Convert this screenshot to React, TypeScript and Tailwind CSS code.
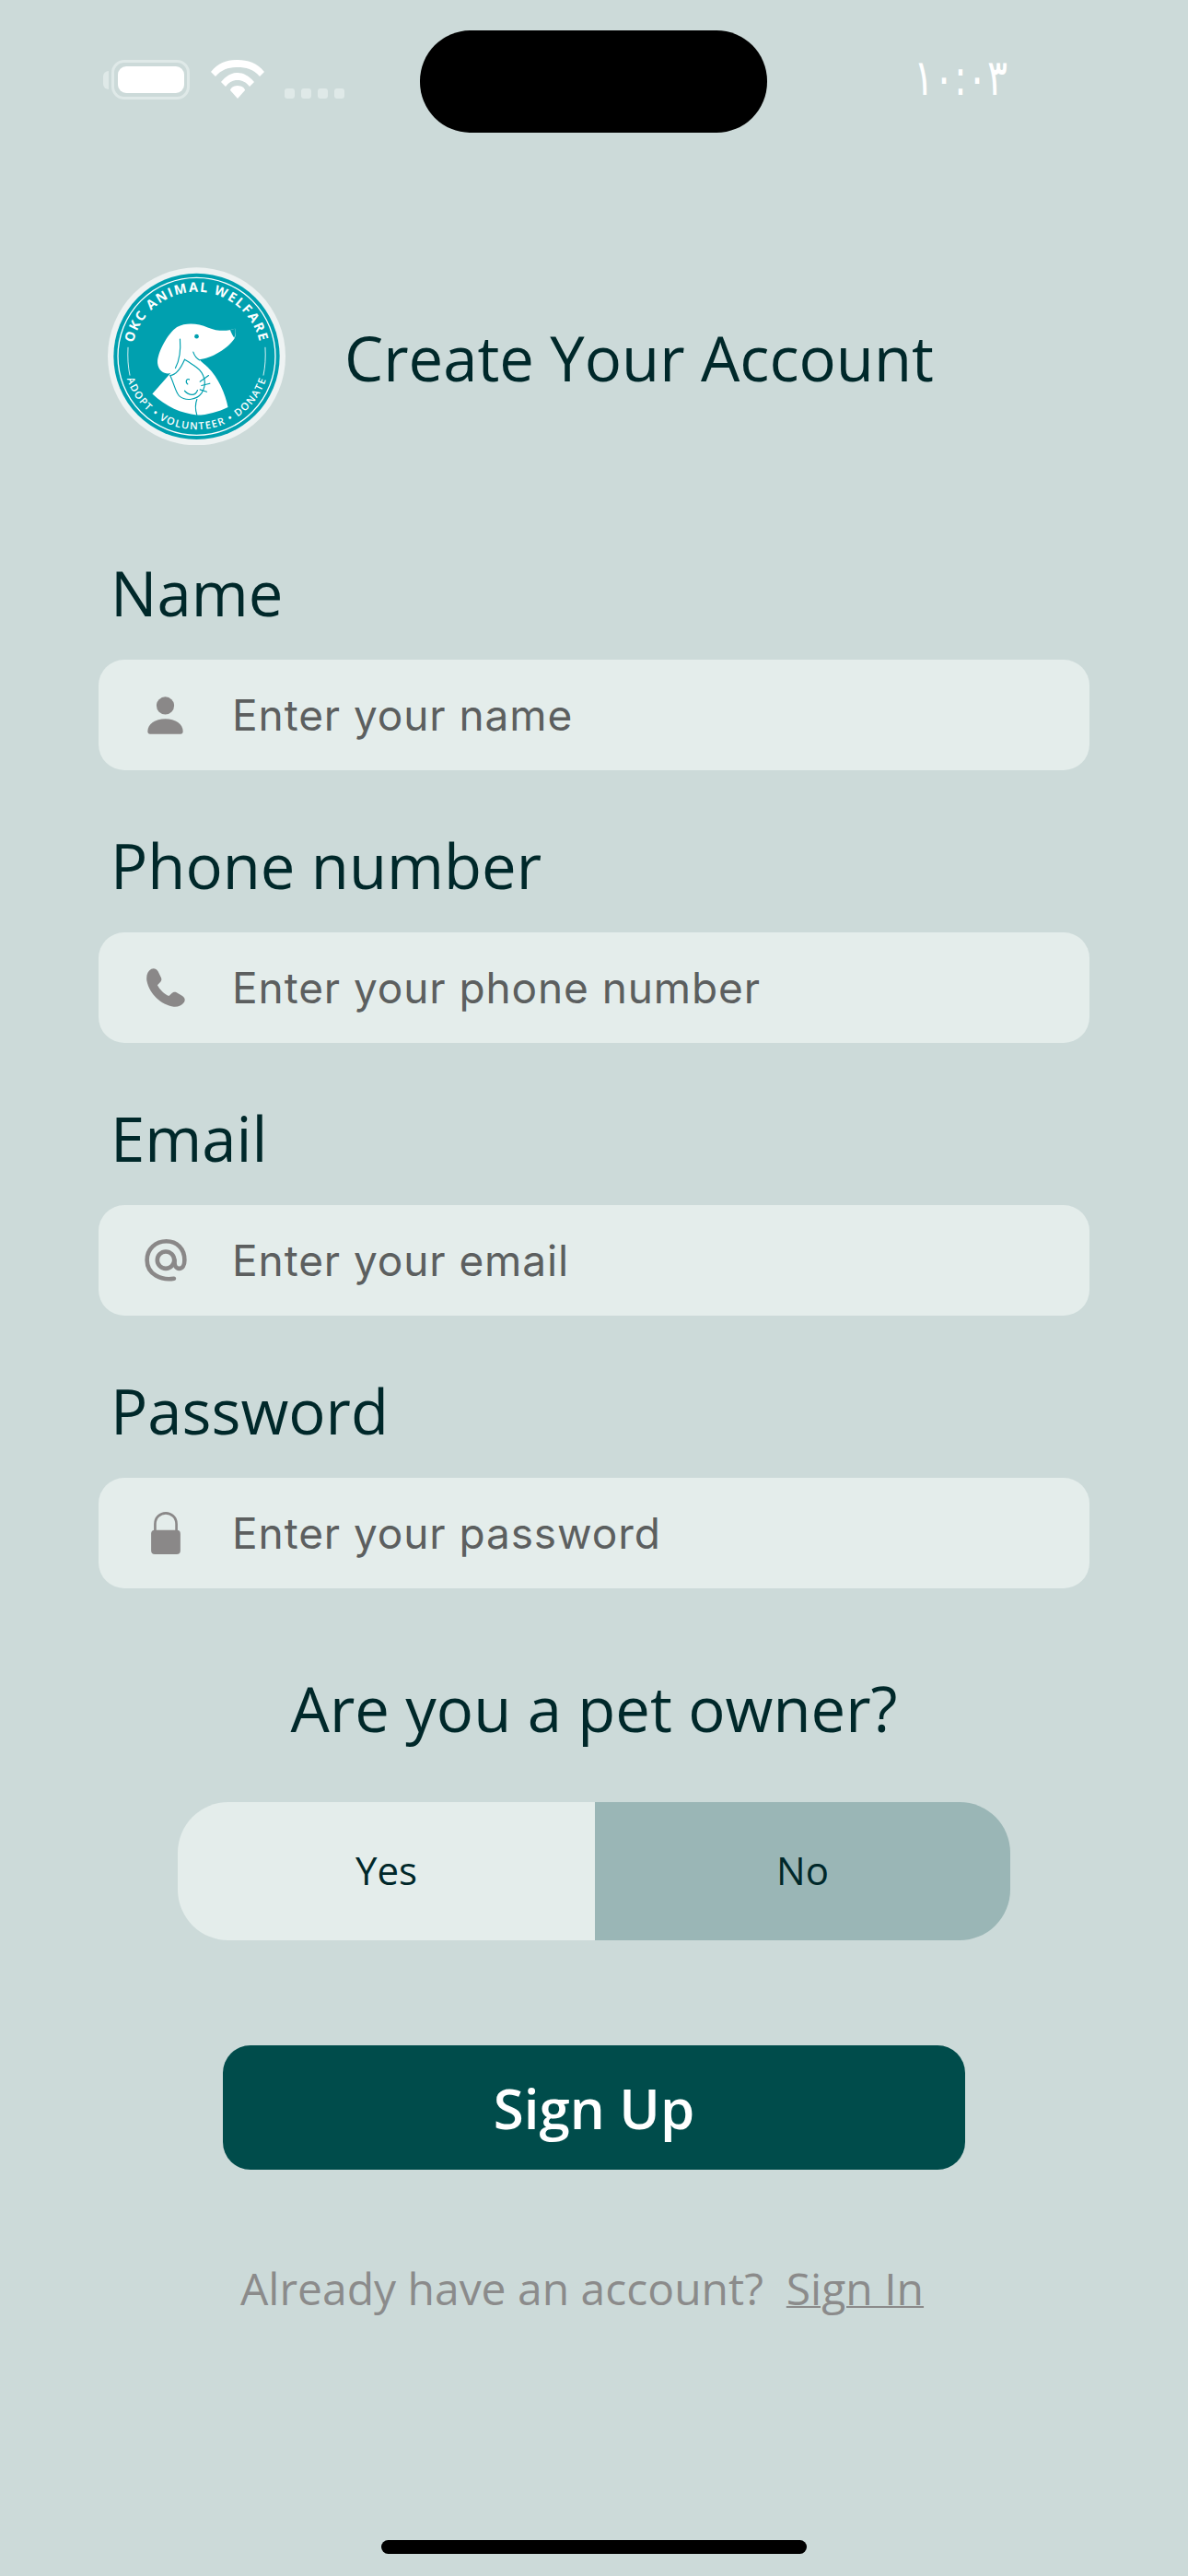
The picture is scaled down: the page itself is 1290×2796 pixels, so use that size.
import type { ReactNode } from 'react';

function PersonIcon() {
  return (
    <svg viewBox="0 0 116 124" className="h-[41px] w-[39px]" fill="currentColor">
      <circle cx="58" cy="30" r="29" />
      <path d="M 0 114 C 0 90 25 73 58 73 C 91 73 116 90 116 114 C 116 120 113 123 108 123 L 8 123 C 3 123 0 120 0 114 Z" />
    </svg>
  );
}

function PhoneIcon() {
  return (
    <svg viewBox="0 0 127 127" className="h-[42px] w-[42px]" fill="currentColor">
      <path d="M 16 2 C 25 -2 33 2 38 10 L 48 30 C 51 37 49 42 44 47 L 36 55 C 44 70 58 84 74 91 L 82 83 C 87 78 92 76 99 79 L 118 91 C 126 96 128 104 124 111 C 116 122 104 127 90 126 C 48 120 10 85 1 40 C -1 22 4 9 16 2 Z" />
    </svg>
  );
}

function AtIcon() {
  return (
    <svg viewBox="108 163 140 140" className="h-[46px] w-[46px]" fill="none" stroke="currentColor" strokeWidth="14" strokeLinecap="round">
      <path d="M 205 293 C 165 300 116 280 116 232 C 116 195 145 170 180 170 C 215 170 240 195 240 232 C 240 250 233 260 222 260 C 212 260 207 250 207 240 L 207 232" />
      <circle cx="178" cy="232" r="28" />
    </svg>
  );
}

function LockIcon() {
  return (
    <svg viewBox="0 0 96 139" className="h-[46px] w-[32px]" fill="currentColor">
      <path d="M 13 62 V 40 C 13 18 30 4 48 4 C 66 4 83 18 83 40 V 62" fill="none" stroke="currentColor" strokeWidth="8" />
      <rect x="0" y="60" width="96" height="79" rx="12" />
    </svg>
  );
}

const fields: { label: string; placeholder: string; icon: ReactNode }[] = [
  { label: 'Name', placeholder: 'Enter your name', icon: <PersonIcon /> },
  { label: 'Phone number', placeholder: 'Enter your phone number', icon: <PhoneIcon /> },
  { label: 'Email', placeholder: 'Enter your email', icon: <AtIcon /> },
  { label: 'Password', placeholder: 'Enter your password', icon: <LockIcon /> },
];

function Logo() {
  return (
    <svg viewBox="80 60 578 578" className="h-[193px] w-[193px] shrink-0">
      <defs>
        <path id="logo-top" d="M 159 350 A 210 210 0 0 1 579 350" />
        <path id="logo-bottom" d="M 131 350 A 238 238 0 0 0 607 350" />
      </defs>
      <circle cx="369" cy="350" r="289" fill="#eef3f3" />
      <circle cx="369" cy="350" r="270" fill="#00a0af" />
      <circle cx="369" cy="350" r="256" fill="none" stroke="#fff" strokeWidth="4" />
      <text fill="#fff" fontFamily="'Open Sans', sans-serif" fontWeight="700" fontSize="43" letterSpacing="5" textAnchor="middle">
        <textPath href="#logo-top" startOffset="50%">OKC ANIMAL WELFARE</textPath>
      </text>
      <text fill="#fff" fontFamily="'Open Sans', sans-serif" fontWeight="600" fontSize="33" letterSpacing="4" textAnchor="middle">
        <textPath href="#logo-bottom" startOffset="50%">ADOPT • VOLUNTEER • DONATE</textPath>
      </text>
      <path d="M 146 320 Q 143 370 152 412 M 592 320 Q 595 370 586 412" fill="none" stroke="#fff" strokeWidth="2.5" />
      <path
        fill="#fff"
        d="M 494 260 C 470 268 440 270 405 256 C 375 243 335 238 305 255 C 275 275 240 340 242 372 C 245 400 270 410 285 404 L 225 472 C 270 515 320 535 370 541 C 405 540 440 530 471 515 C 462 470 440 420 405 385 C 395 375 385 368 378 360 C 420 355 470 325 492 292 C 497 282 496 270 494 260 Z"
      />
      <path d="M 478 264 C 482 275 486 283 491 290 C 496 280 496 270 494 260 Z" fill="#00a0af" />
      <circle cx="369" cy="285" r="7" fill="#00a0af" />
      <g fill="none" stroke="#00a0af" strokeWidth="3.5" strokeLinecap="round">
        <path d="M 315 294 C 318 330 312 365 300 388" />
        <path d="M 358 336 C 362 348 368 356 378 362" />
        <path d="M 283 412 C 300 410 315 395 330 360 C 345 368 358 378 368 385 C 395 405 405 440 385 470 C 370 490 335 498 312 478 C 300 465 298 445 283 412 Z" fill="#fff" />
        <path d="M 345 425 C 335 420 332 435 340 440 M 330 462 C 345 478 365 480 372 460 M 380 432 L 408 412 M 385 445 L 412 438 M 380 458 L 402 465" />
        <path d="M 370 490 C 362 510 366 528 370 541" />
      </g>
    </svg>
  );
}

function StatusBar() {
  return (
    <div className="flex h-[144px] items-start pl-[112px] pt-[33px]">
      <div className="mt-[32px] flex h-[43px] w-[94px] shrink-0 items-center">
        <div className="h-[20px] w-[6px] rounded-l-full bg-[#dfe9e8]" />
        <div className="ml-[3px] flex h-[43px] w-[85px] items-center justify-center rounded-[14px] border-[3px] border-[#dfe9e8]">
          <div className="h-[29px] w-[72px] rounded-[9px] bg-white" />
        </div>
      </div>
      <svg viewBox="0 0 58 42" className="ml-[23px] mt-[32px] h-[42px] w-[58px] shrink-0" fill="#fff">
        <path d="M 0 13 C 8 3 18 0 29 0 C 40 0 50 3 58 13 L 53 18 C 46 10 38 8 29 8 C 20 8 12 10 5 18 Z" />
        <path d="M 11 24 C 17 17 23 14 29 14 C 35 14 41 17 47 24 L 42 29 C 38 24 34 22 29 22 C 24 22 20 24 16 29 Z" />
        <path d="M 29 28 C 34 28 37 31 37 33 L 29 42 L 21 33 C 21 31 24 28 29 28 Z" />
      </svg>
      <div className="ml-[22px] mt-[63px] flex shrink-0 gap-[7px]">
        <div className="h-[11px] w-[11px] rounded-[3px] bg-[#dfe9e8]" />
        <div className="h-[11px] w-[11px] rounded-[3px] bg-[#dfe9e8]" />
        <div className="h-[11px] w-[11px] rounded-[3px] bg-[#dfe9e8]" />
        <div className="h-[11px] w-[11px] rounded-[3px] bg-[#dfe9e8]" />
      </div>
      <div className="ml-[82px] h-[111px] w-[377px] shrink-0 rounded-[55px] bg-black" />
      <div className="ml-[159px] mt-[22px] origin-left scale-x-[0.76] font-['DejaVu_Sans',sans-serif] text-[54px] leading-[60px] tracking-[-9px] text-white">١٠:٠٣</div>
    </div>
  );
}

export default function App() {
  return (
    <div className="h-[2796px] w-[1290px] overflow-hidden bg-[#ccdad9] font-['Open_Sans',sans-serif] text-[#00282a]">
      <StatusBar />

      <div className="mt-[146px] flex items-center pl-[117px]">
        <Logo />
        <h1 className="ml-[64px] mt-[2px] text-[67px] font-normal leading-[90px]">Create Your Account</h1>
      </div>

      <div className="mt-[115px] flex flex-col px-[107px]">
        {fields.map((field) => (
          <div key={field.label} className="mt-[58px] flex flex-col first:mt-0">
            <label className="mb-[28px] pl-[13px] text-[67px] leading-[90px]">{field.label}</label>
            <div className="flex h-[120px] items-center rounded-[28px] bg-[#e4edeb]">
              <div className="flex w-[145px] shrink-0 justify-center text-[#8a8888]">{field.icon}</div>
              <span className="font-['Inter',sans-serif] text-[46px] tracking-[0.9px] text-[#5c5f5f]">{field.placeholder}</span>
            </div>
          </div>
        ))}
      </div>

      <h2 className="mt-[85px] text-center text-[67px] font-normal leading-[90px]">Are you a pet owner?</h2>

      <div className="mx-[193px] mt-[57px] flex h-[150px] overflow-hidden rounded-[55px] text-[42px]">
        <button className="w-[453px] bg-[#e4edeb] pb-[4px]">Yes</button>
        <button className="flex-1 bg-[#9ab6b6] pb-[4px]">No</button>
      </div>

      <button className="mx-[242px] mt-[114px] block h-[135px] w-[806px] rounded-[30px] bg-[#004c4b] text-[60px] font-semibold text-white">
        Sign Up
      </button>

      <p className="mt-[85px] pr-[26px] text-center text-[48px] leading-[88px] text-[#8b8b8b]">
        Already have an account?&nbsp; <span className="underline decoration-[2px]">Sign In</span>
      </p>

      <div className="mx-auto mt-[229px] h-[15px] w-[462px] rounded-[8px] bg-black" />
    </div>
  );
}
